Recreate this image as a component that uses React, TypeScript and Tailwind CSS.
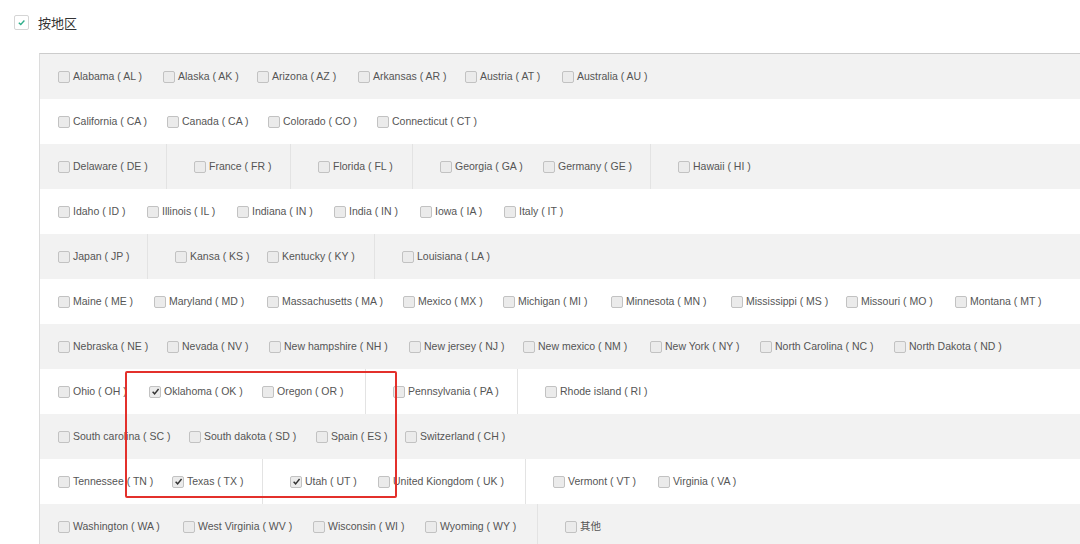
import React from 'react';
import clsx from 'clsx';

type Cell = { label: string; w: string; sep?: boolean; checked?: boolean };

// widths taken from the checkbox positions in the mock
const rows: Cell[][] = [
  [
    { label: 'Alabama ( AL )', w: 'w-[105px]' },
    { label: 'Alaska ( AK )', w: 'w-[94px]' },
    { label: 'Arizona ( AZ )', w: 'w-[101px]' },
    { label: 'Arkansas ( AR )', w: 'w-[107px]' },
    { label: 'Austria ( AT )', w: 'w-[97px]' },
    { label: 'Australia ( AU )', w: 'flex-1' },
  ],
  [
    { label: 'California ( CA )', w: 'w-[109px]' },
    { label: 'Canada ( CA )', w: 'w-[101px]' },
    { label: 'Colorado ( CO )', w: 'w-[109px]' },
    { label: 'Connecticut ( CT )', w: 'flex-1' },
  ],
  [
    { label: 'Delaware ( DE )', w: 'w-[108px]' },
    { label: 'France ( FR )', w: 'w-[124px]', sep: true },
    { label: 'Florida ( FL )', w: 'w-[122px]', sep: true },
    { label: 'Georgia ( GA )', w: 'w-[131px]', sep: true },
    { label: 'Germany ( GE )', w: 'w-[107px]' },
    { label: 'Hawaii ( HI )', w: 'flex-1', sep: true },
  ],
  [
    { label: 'Idaho ( ID )', w: 'w-[89px]' },
    { label: 'Illinois ( IL )', w: 'w-[90px]' },
    { label: 'Indiana ( IN )', w: 'w-[97px]' },
    { label: 'India ( IN )', w: 'w-[86px]' },
    { label: 'Iowa ( IA )', w: 'w-[84px]' },
    { label: 'Italy ( IT )', w: 'flex-1' },
  ],
  [
    { label: 'Japan ( JP )', w: 'w-[89px]' },
    { label: 'Kansa ( KS )', w: 'w-[120px]', sep: true },
    { label: 'Kentucky ( KY )', w: 'w-[107px]' },
    { label: 'Louisiana ( LA )', w: 'flex-1', sep: true },
  ],
  [
    { label: 'Maine ( ME )', w: 'w-[96px]' },
    { label: 'Maryland ( MD )', w: 'w-[113px]' },
    { label: 'Massachusetts ( MA )', w: 'w-[136px]' },
    { label: 'Mexico ( MX )', w: 'w-[100px]' },
    { label: 'Michigan ( MI )', w: 'w-[108px]' },
    { label: 'Minnesota ( MN )', w: 'w-[120px]' },
    { label: 'Mississippi ( MS )', w: 'w-[115px]' },
    { label: 'Missouri ( MO )', w: 'w-[109px]' },
    { label: 'Montana ( MT )', w: 'flex-1' },
  ],
  [
    { label: 'Nebraska ( NE )', w: 'w-[109px]' },
    { label: 'Nevada ( NV )', w: 'w-[102px]' },
    { label: 'New hampshire ( NH )', w: 'w-[140px]' },
    { label: 'New jersey ( NJ )', w: 'w-[114px]' },
    { label: 'New mexico ( NM )', w: 'w-[127px]' },
    { label: 'New York ( NY )', w: 'w-[110px]' },
    { label: 'North Carolina ( NC )', w: 'w-[134px]' },
    { label: 'North Dakota ( ND )', w: 'flex-1' },
  ],
  [
    { label: 'Ohio ( OH )', w: 'w-[91px]' },
    { label: 'Oklahoma ( OK )', w: 'w-[113px]', checked: true },
    { label: 'Oregon ( OR )', w: 'w-[103px]' },
    { label: 'Pennsylvania ( PA )', w: 'w-[152px]', sep: true },
    { label: 'Rhode island ( RI )', w: 'flex-1', sep: true },
  ],
  [
    { label: 'South carolina ( SC )', w: 'w-[131px]' },
    { label: 'South dakota ( SD )', w: 'w-[127px]' },
    { label: 'Spain ( ES )', w: 'w-[89px]' },
    { label: 'Switzerland ( CH )', w: 'flex-1' },
  ],
  [
    { label: 'Tennessee ( TN )', w: 'w-[114px]' },
    { label: 'Texas ( TX )', w: 'w-[90px]', checked: true },
    { label: 'Utah ( UT )', w: 'w-[116px]', sep: true, checked: true },
    { label: 'United Kiongdom ( UK )', w: 'w-[147px]' },
    { label: 'Vermont ( VT )', w: 'w-[133px]', sep: true },
    { label: 'Virginia ( VA )', w: 'flex-1' },
  ],
  [
    { label: 'Washington ( WA )', w: 'w-[125px]' },
    { label: 'West Virginia ( WV )', w: 'w-[130px]' },
    { label: 'Wisconsin ( WI )', w: 'w-[112px]' },
    { label: 'Wyoming ( WY )', w: 'w-[112px]' },
    { label: '其他', w: 'flex-1', sep: true },
  ],
];

const Box = ({ checked }: { checked?: boolean }) => (
  <span className="mr-[3px] flex h-3 w-3 shrink-0 items-center justify-center rounded-[2px] border border-[#c2c2c2] bg-[#ebebeb]">
    {checked && (
      <svg width="9" height="9" viewBox="0 0 10 10">
        <path d="M1.8 5.3 L4 7.6 L8.4 2.2" fill="none" stroke="#333" strokeWidth="1.6" />
      </svg>
    )}
  </span>
);

export default function App() {
  return (
    <div className="relative h-[544px] w-[1080px] overflow-hidden bg-white font-['Liberation_Sans','Noto_Sans_CJK_SC',sans-serif]">
      {/* 标题 */}
      <div className="flex h-[53px] items-start gap-[9px] pl-[14px] pt-[15px]">
        <span className="flex h-[15px] w-[15px] items-center justify-center rounded-[2px] border border-[#d5d5d5] bg-white">
          <svg width="9" height="9" viewBox="0 0 10 10">
            <path d="M2 5.2 L4.2 7.3 L8.2 2.8" fill="none" stroke="#2fae8a" strokeWidth="1.5" />
          </svg>
        </span>
        <span className="font-['Noto_Sans_CJK_SC',sans-serif] text-[13px] leading-[15px] text-[#333]">按地区</span>
      </div>

      <div className="ml-[39px] border-l border-t border-l-[#dcdcdc] border-t-[#cccccc]">
        {rows.map((cells, i) => (
          <div
            key={i}
            className={clsx('flex h-[45px] pl-[18px]', i % 2 === 0 ? 'bg-[#f2f2f2]' : 'bg-white')}
          >
            {cells.map((c) => (
              <div
                key={c.label}
                className={clsx(
                  'flex h-full shrink-0 items-center text-[10.5px] text-[#555]',
                  c.w,
                  c.sep && 'border-l border-[#e3e3e3] pl-[27px]'
                )}
              >
                <Box checked={c.checked} />
                <span className="whitespace-nowrap">{c.label}</span>
              </div>
            ))}
          </div>
        ))}
      </div>

      {/* 标注框 */}
      <div className="pointer-events-none absolute left-[125px] top-[371px] h-[127px] w-[272px] rounded-[2px] border-2 border-[#e3302b]" />
    </div>
  );
}
